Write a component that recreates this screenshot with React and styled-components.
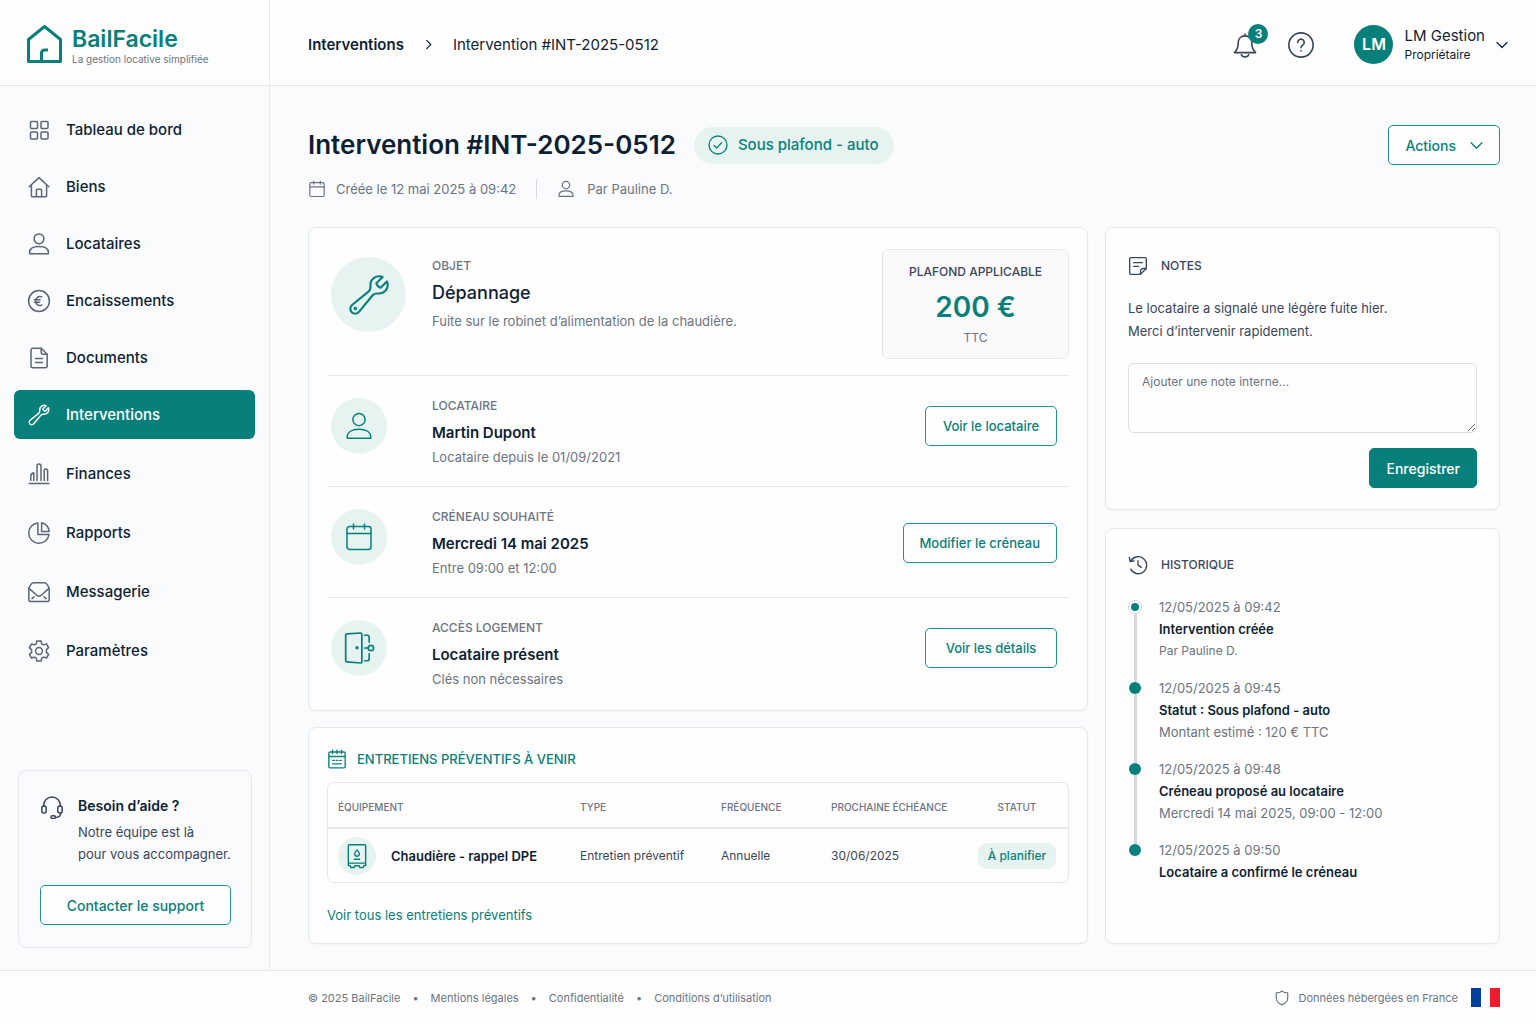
import React from 'react'
import styled, {createGlobalStyle, ThemeProvider} from 'styled-components'

const theme = {
  colours: {
    teal: '#07807b',
    tealBorder: '#23928d',
    tealSoft: '#e7f3f1',
    navy: '#0e1e33',
    slate: '#39465a',
    grey: '#6b7482',
    line: '#e4e7eb',
    page: '#fafbfc',
    white: '#fefefe'
  }
}

const GlobalStyle = createGlobalStyle`
  *, *::before, *::after {
    box-sizing: border-box;
  }

  body {
    margin: 0;
    background: ${theme.colours.page};
    color: ${theme.colours.navy};
    font-family: Inter, 'Liberation Sans', sans-serif;
    font-size: 13px;
    line-height: 20px;
  }

  h1, h2, h3, p, ul, ol, dl, dd {
    margin: 0;
    padding: 0;
  }

  ul, ol {
    list-style: none;
  }

  a {
    color: inherit;
    text-decoration: none;
  }

  button, textarea {
    font-family: inherit;
  }
`

const Svg = styled.svg`
  display: block;
  flex: none;
  width: ${props => props.$size || 24}px;
  height: ${props => props.$size || 24}px;
  fill: none;
  stroke: currentColor;
  stroke-width: ${props => props.$weight || 1.5};
  stroke-linecap: round;
  stroke-linejoin: round;
`

const Icon = ({size, weight, children}) => (
  <Svg $size={size} $weight={weight} viewBox="0 0 24 24" aria-hidden="true">
    {children}
  </Svg>
)

const GridIcon = props => (
  <Icon {...props}>
    <rect x="3.5" y="3.5" width="7" height="7" rx="1" />
    <rect x="14" y="3.5" width="7" height="7" rx="1" />
    <rect x="3.5" y="14" width="7" height="7" rx="1" />
    <rect x="14" y="14" width="7" height="7" rx="1" />
  </Icon>
)

const HomeIcon = props => (
  <Icon {...props}>
    <path d="M2.2 11.8 12 2.6l9.8 9.2" />
    <path d="M4.4 10v10.6a1.2 1.2 0 0 0 1.2 1.2h12.8a1.2 1.2 0 0 0 1.2-1.2V10" />
    <path d="M9.4 21.6v-6.4a1 1 0 0 1 1-1h3.2a1 1 0 0 1 1 1v6.4" />
  </Icon>
)

const UserIcon = props => (
  <Icon {...props}>
    <circle cx="12" cy="6.8" r="4.9" />
    <path d="M2.6 21.8v-1.2c0-3.7 3.6-6 9.4-6s9.4 2.3 9.4 6v1.2z" />
  </Icon>
)

const EuroIcon = props => (
  <Icon {...props}>
    <circle cx="12" cy="12" r="10.4" />
    <path d="M14.8 7.9a4.2 4.2 0 0 0-6 4.1 4.2 4.2 0 0 0 6 4.1M7.4 10.8h5.8M7.4 13.3h5.2" />
  </Icon>
)

const DocumentIcon = props => (
  <Icon {...props}>
    <path d="M14.2 2.2H6a2 2 0 0 0-2 2v15.6a2 2 0 0 0 2 2h12.2a2 2 0 0 0 2-2V8.2z" />
    <path d="M14.2 2.2v4a2 2 0 0 0 2 2h4M8.5 12.6h7M8.5 16.4h7" />
  </Icon>
)

const WrenchIcon = ({dot, ...props}) => (
  <Icon {...props}>
    <path d="M21.75 6.75a4.5 4.5 0 0 1-4.884 4.484c-1.076-.091-2.264.071-2.95.904l-7.152 8.684a2.548 2.548 0 1 1-3.586-3.586l8.684-7.152c.833-.686.995-1.874.904-2.95a4.5 4.5 0 0 1 6.336-4.486l-3.276 3.276a3.004 3.004 0 0 0 2.25 2.25l3.276-3.276c.256.565.398 1.192.398 1.852Z" />
    {dot && <circle cx="4.9" cy="19.1" r="0.4" />}
  </Icon>
)

const BarsIcon = props => (
  <Icon {...props}>
    <path d="M2.2 21.6h19.6M3.8 18.4v-4.2c0-1.8 1.2-3 3-3.4v7.6" />
    <path d="M10 18.4V4a2 2 0 0 1 4 0v14.4M17.2 18.4V9a1.7 1.7 0 0 1 3.4-.6v10" />
  </Icon>
)

const PieIcon = props => (
  <Icon {...props}>
    <path d="M10.9 1.9A10.2 10.2 0 1 0 22 13.6H10.9z" />
    <path d="M14.6 1.8v8.6h7.5a9.6 9.6 0 0 0-7.5-8.6z" />
  </Icon>
)

const MailIcon = props => (
  <Icon {...props}>
    <path d="M1.8 8.2v11a2.4 2.4 0 0 0 2.4 2.4h15.6a2.4 2.4 0 0 0 2.4-2.4v-11L19.8 4a3 3 0 0 0-2.4-1.2H6.6A3 3 0 0 0 4.2 4z" />
    <path d="m2 8.4 7.8 6.8a3.2 3.2 0 0 0 4.4 0L22 8.4M5 18.6l2-1.8M19 18.6l-2-1.8" />
  </Icon>
)

const GearIcon = props => (
  <Icon {...props}>
    <circle cx="12" cy="12" r="3.4" />
    <path d="M9.9 1.9h4.2l.6 2.9 2 1.1 2.8-.9 2.1 3.6-2.2 2v2.8l2.2 2-2.1 3.6-2.8-.9-2 1.1-.6 2.9H9.9l-.6-2.9-2-1.1-2.8.9-2.1-3.6 2.2-2v-2.8l-2.2-2L4.5 5l2.8.9 2-1.1z" />
  </Icon>
)

const HeadsetIcon = props => (
  <Icon {...props}>
    <path d="M3.6 11v-.6a8.4 8.4 0 0 1 16.8 0v.6" />
    <rect x="1.8" y="11" width="4.4" height="7" rx="2" />
    <rect x="17.8" y="11" width="4.4" height="7" rx="2" />
    <path d="M20.8 18c0 3-2.6 4.4-5.4 4.4" />
    <rect x="11" y="20.8" width="4.4" height="2.6" rx="1.3" />
  </Icon>
)

const BellIcon = props => (
  <Icon {...props}>
    <path d="M12 2v1.6M12 3.6c-4 0-6.3 2.8-6.3 6.6 0 4.8-1.2 6.8-3.5 8.8h19.6c-2.3-2-3.5-4-3.5-8.8 0-3.8-2.3-6.6-6.3-6.6z" />
    <path d="M8.6 21c.5 1.3 1.8 2 3.4 2s2.9-.7 3.4-2" />
  </Icon>
)

const HelpIcon = props => (
  <Icon {...props}>
    <circle cx="12" cy="12" r="11.2" />
    <path d="M9 9.6a3 3 0 1 1 4.6 2.5c-1 .7-1.6 1.2-1.6 2.4M12 17.3v.2" />
  </Icon>
)

const ChevronIcon = ({right, ...props}) => (
  <Icon {...props}>
    <path d={right ? 'm8 3 9 9-9 9' : 'm2 7 10 10L22 7'} />
  </Icon>
)

const CheckCircleIcon = props => (
  <Icon {...props}>
    <circle cx="12" cy="12" r="10.8" />
    <path d="m7.4 12.6 3 3 6-6.4" />
  </Icon>
)

const CalendarIcon = props => (
  <Icon {...props}>
    <rect x="2.4" y="3.6" width="19.2" height="18.4" rx="2" />
    <path d="M2.4 9.2h19.2M7.6 1.6v4M16.4 1.6v4" />
  </Icon>
)

const PlannerIcon = props => (
  <Icon {...props}>
    <rect x="2.2" y="3.6" width="19.6" height="19" rx="1.6" />
    <path d="M2.2 9h19.6M6.6 1.4v4M12 1.4v4M17.4 1.4v4M6.8 13.6h2M11 13.6h2M15.2 13.6h2M6.8 17.8h10.4" />
  </Icon>
)

const DoorIcon = props => (
  <Icon {...props}>
    <path d="M2.6 2.8a.8.8 0 0 1 .8-.8l9.8-.6a.8.8 0 0 1 .8.8v19.6a.8.8 0 0 1-.8.8l-9.8-.8a.8.8 0 0 1-.8-.8z" />
    <path d="M16 3h1.8a1.4 1.4 0 0 1 1.4 1.4v3.4M19.2 16.2v3.4a1.4 1.4 0 0 1-1.4 1.4H16M16 12h2.4" />
    <circle cx="20.4" cy="12" r="1.9" />
    <circle cx="10.6" cy="11.8" r="0.6" fill="currentColor" />
  </Icon>
)

const BoilerIcon = props => (
  <Icon {...props}>
    <rect x="4" y="1.6" width="16" height="17" rx="1" />
    <path d="M4 18.6v2.2h1.6l.6 1.8h3.2l.6-1.6h4l.6 1.6h3.2l.6-1.8H20v-2.2M9.6 15h4.8" />
    <path d="M12 6.4c-1.4 1.6-2.2 2.4-2.2 3.6a2.2 2.2 0 0 0 4.4 0c0-1.2-.8-2-2.2-3.6z" />
  </Icon>
)

const NoteIcon = props => (
  <Icon {...props}>
    <path d="M22 15V3.6A1.6 1.6 0 0 0 20.4 2H3.6A1.6 1.6 0 0 0 2 3.6v16.8A1.6 1.6 0 0 0 3.6 22H15z" />
    <path d="M15 22v-3.8a3.2 3.2 0 0 1 3.2-3.2H22M6.8 8h10.4M6.8 12.4H13" />
  </Icon>
)

const HistoryIcon = props => (
  <Icon {...props}>
    <path d="M3.6 6.8A10.2 10.2 0 1 1 3.2 17M1.6 3l1 4.8 4.8-.8M12 6.8v5.4l4 2.6" />
  </Icon>
)

const ShieldIcon = props => (
  <Icon {...props}>
    <path d="M12 1.8c2.6 1.7 5.6 2.4 8.6 2.4v7.6c0 5-3.2 8.6-8.6 10.6-5.4-2-8.6-5.6-8.6-10.6V4.2c3 0 6-.7 8.6-2.4z" />
  </Icon>
)

const Page = styled.div`
  display: grid;
  grid-template-columns: 270px minmax(0, 1fr);
  grid-template-rows: 86px 1fr auto;
  min-height: 100vh;
`

const Brand = styled.a`
  display: flex;
  align-items: center;
  gap: 9px;
  padding: 2px 0 0 26px;
  background: ${props => props.theme.colours.white};
  border-right: 1px solid ${props => props.theme.colours.line};
  border-bottom: 1px solid ${props => props.theme.colours.line};
`

const BrandMark = styled.svg`
  display: block;
  width: 37px;
  height: 40px;
  fill: none;
  stroke: ${props => props.theme.colours.teal};
  stroke-width: 3;
  stroke-linejoin: round;
`

const BrandText = styled.span`
  padding-top: 4px;
`

const BrandName = styled.strong`
  display: block;
  font-size: 23px;
  line-height: 26px;
  font-weight: 600;
  color: ${props => props.theme.colours.teal};
`

const BrandTagline = styled.span`
  display: block;
  font-size: 10px;
  line-height: 14px;
  color: ${props => props.theme.colours.grey};
`

const TopBar = styled.header`
  display: flex;
  align-items: center;
  justify-content: space-between;
  padding: 4px 28px 0 38px;
  background: ${props => props.theme.colours.white};
  border-bottom: 1px solid ${props => props.theme.colours.line};
`

const Breadcrumb = styled.nav`
  display: flex;
  align-items: center;
  gap: 19px;
  font-size: 15px;
`

const Crumb = styled.a`
  font-weight: ${props => (props.$strong ? 600 : 400)};
`

const TopActions = styled.div`
  display: flex;
  align-items: center;
`

const IconButton = styled.button`
  position: relative;
  display: flex;
  margin-right: 30px;
  padding: 0;
  border: 0;
  background: none;
  color: ${props => props.theme.colours.slate};
  cursor: pointer;
`

const Counter = styled.span`
  position: absolute;
  top: -8px;
  right: -10px;
  width: 20px;
  border-radius: 50%;
  background: ${props => props.theme.colours.teal};
  color: #fff;
  font-size: 12px;
  line-height: 20px;
  font-weight: 600;
  text-align: center;
`

const Account = styled.button`
  display: flex;
  align-items: center;
  gap: 11px;
  margin-left: 10px;
  padding: 0;
  border: 0;
  background: none;
  color: ${props => props.theme.colours.navy};
  font-size: 15px;
  line-height: 20px;
  text-align: left;
  cursor: pointer;
`

const Avatar = styled.span`
  width: 39px;
  border-radius: 50%;
  background: ${props => props.theme.colours.teal};
  color: #fff;
  font-size: 16px;
  line-height: 39px;
  font-weight: 600;
  text-align: center;
`

const AccountRole = styled.span`
  display: block;
  font-size: 12px;
  line-height: 18px;
`

const Sidebar = styled.aside`
  display: flex;
  flex-direction: column;
  justify-content: space-between;
  padding: 19px 14px 22px;
  border-right: 1px solid ${props => props.theme.colours.line};
`

const NavList = styled.ul`
  display: flex;
  flex-direction: column;
  gap: ${props => props.$gap}px;

  & + & {
    margin-top: 10px;
  }
`

const NavLink = styled.a`
  display: flex;
  align-items: center;
  gap: 15px;
  height: 49px;
  padding-left: 13px;
  border-radius: 6px;
  background: ${props => (props.$active ? props.theme.colours.teal : 'none')};
  color: ${props => (props.$active ? '#fff' : props.theme.colours.navy)};
  font-size: 15px;
  font-weight: 500;

  svg {
    color: ${props => (props.$active ? '#fff' : '#5b6575')};
  }
`

const HelpBox = styled.section`
  display: flex;
  flex-direction: column;
  gap: 20px;
  margin: 24px 3px 0 4px;
  padding: 24px 20px 22px 21px;
  border: 1px solid ${props => props.theme.colours.line};
  border-radius: 8px;
`

const HelpIntro = styled.div`
  display: flex;
  gap: 14px;
  color: ${props => props.theme.colours.slate};
  line-height: 22px;
`

const HelpTitle = styled.h2`
  margin-bottom: 4px;
  color: ${props => props.theme.colours.navy};
  font-size: 14px;
  line-height: 22px;
  font-weight: 600;
`

const Button = styled.button`
  display: inline-flex;
  align-items: center;
  justify-content: center;
  gap: 14px;
  height: 40px;
  padding: 0 16px;
  border: 1px solid
    ${props => props.theme.colours[props.$filled ? 'teal' : 'tealBorder']};
  border-radius: 5px;
  background: ${props =>
    props.$filled ? props.theme.colours.teal : props.theme.colours.white};
  color: ${props => (props.$filled ? '#fff' : props.theme.colours.teal)};
  font-size: ${props => (props.$large ? 14 : 13)}px;
  font-weight: 500;
  white-space: nowrap;
  cursor: pointer;
`

const Main = styled.main`
  padding: 39px 36px 25px 38px;
`

const TitleRow = styled.div`
  display: flex;
  align-items: center;
  gap: 18px;
  margin-bottom: 14px;

  button {
    margin-left: auto;
  }
`

const Title = styled.h1`
  font-size: 26px;
  line-height: 40px;
  font-weight: 600;
`

const StatusPill = styled.span`
  display: flex;
  align-items: center;
  gap: 10px;
  height: 37px;
  padding: 0 16px 0 14px;
  border-radius: 19px;
  background: ${props => props.theme.colours.tealSoft};
  color: ${props => props.theme.colours.teal};
  font-size: 15px;
  font-weight: 500;
`

const Meta = styled.ul`
  display: flex;
  align-items: center;
  margin-bottom: 28px;
  color: ${props => props.theme.colours.grey};
`

const MetaItem = styled.li`
  display: flex;
  align-items: center;
  gap: 10px;

  & + & {
    gap: 12px;
    margin-left: 20px;
    padding-left: 20px;
    border-left: 1px solid #d6dae0;
  }
`

const Columns = styled.div`
  display: grid;
  grid-template-columns: minmax(0, 1fr) 395px;
  gap: 17px;
`

const Stack = styled.div`
  display: flex;
  flex-direction: column;
  gap: ${props => props.$gap}px;
`

const Card = styled.section`
  flex: ${props => (props.$grow ? 1 : 'none')};
  padding: ${props => props.$pad};
  border: 1px solid ${props => props.theme.colours.line};
  border-radius: 8px;
  background: ${props => props.theme.colours.white};
  box-shadow: 0 1px 2px rgba(15, 30, 50, 0.03);
`

const DetailRow = styled.div`
  display: grid;
  grid-template-columns: 77px minmax(0, 1fr) auto;
  column-gap: 24px;
  padding: ${props => (props.$first ? '21px 0 16px 4px' : '21px 12px 19px 4px')};

  & + & {
    border-top: 1px solid ${props => props.theme.colours.line};
  }
`

const Disc = styled.span`
  display: flex;
  align-items: center;
  justify-content: center;
  width: ${props => props.$size}px;
  height: ${props => props.$size}px;
  margin-top: ${props => props.$drop || 0}px;
  border-radius: 50%;
  background: ${props => props.theme.colours.tealSoft};
  color: ${props => props.theme.colours.teal};
`

const DetailText = styled.div`
  padding-top: ${props => (props.$first ? 8 : 0)}px;
`

const Label = styled.h2`
  color: ${props => props.theme.colours[props.$dark ? 'slate' : 'grey']};
  font-size: 12px;
  line-height: 18px;
  font-weight: 500;
  text-transform: uppercase;
`

const DetailTitle = styled.p`
  margin-top: 6px;
  font-size: ${props => (props.$first ? 18 : 15)}px;
  line-height: 24px;
  font-weight: ${props => (props.$first ? 500 : 600)};
`

const DetailNote = styled.p`
  margin-top: ${props => (props.$first ? 6 : 2)}px;
  color: ${props => props.theme.colours.grey};
`

const DetailAction = styled.div`
  display: flex;
  align-items: center;
  height: ${props => (props.$centred ? '100%' : '58px')};

  button {
    min-width: 132px;
  }
`

const CeilingBox = styled.div`
  display: flex;
  flex-direction: column;
  align-items: center;
  width: 187px;
  padding: 13px 0 11px;
  border: 1px solid ${props => props.theme.colours.line};
  border-radius: 6px;
  background: #fafafb;
`

const CeilingAmount = styled.strong`
  margin: 9px 0 5px;
  color: ${props => props.theme.colours.teal};
  font-size: 28px;
  line-height: 34px;
  font-weight: 600;
`

const CeilingTax = styled.span`
  color: ${props => props.theme.colours.grey};
  font-size: 12px;
  line-height: 18px;
`

const SectionTitle = styled.h2`
  display: flex;
  align-items: center;
  gap: ${props => props.$gap || 10}px;
  color: ${props => props.theme.colours[props.$teal ? 'teal' : 'slate']};
  font-size: ${props => (props.$teal ? 13 : 12)}px;
  line-height: 20px;
  font-weight: 500;
  text-transform: uppercase;
`

const TableFrame = styled.div`
  margin: 13px 0 22px;
  border: 1px solid ${props => props.theme.colours.line};
  border-radius: 7px;
`

const Table = styled.table`
  width: 100%;
  border-collapse: collapse;
  table-layout: fixed;
`

const HeadCell = styled.th`
  width: ${props => props.$width || 'auto'};
  height: 45px;
  padding: 3px 0 0 ${props => (props.$centred ? 0 : 10)}px;
  border-bottom: 2px solid ${props => props.theme.colours.line};
  color: ${props => props.theme.colours.grey};
  font-size: 10px;
  line-height: 16px;
  font-weight: 500;
  text-align: ${props => (props.$centred ? 'center' : 'left')};
  text-transform: uppercase;
`

const Cell = styled.td`
  height: 54px;
  padding: 0 0 0 ${props => (props.$centred ? 0 : 10)}px;
  color: ${props => props.theme.colours.slate};
  font-size: 12px;
  text-align: ${props => (props.$centred ? 'center' : 'left')};
`

const Equipment = styled.div`
  display: flex;
  align-items: center;
  gap: 15px;
  color: ${props => props.theme.colours.navy};
  font-size: 13px;
  font-weight: 600;
`

const PlanTag = styled.span`
  display: inline-block;
  padding: 3px 10px;
  border-radius: 9px;
  background: ${props => props.theme.colours.tealSoft};
  color: ${props => props.theme.colours.teal};
  font-weight: 500;
`

const TextLink = styled.a`
  color: ${props => props.theme.colours.teal};
`

const NoteText = styled.p`
  margin: 21px 0 20px;
  color: ${props => props.theme.colours.slate};
  line-height: 23px;
`

const NoteForm = styled.form`
  display: flex;
  flex-direction: column;
  align-items: flex-end;
  gap: 15px;
`

const NoteInput = styled.textarea`
  display: block;
  width: 100%;
  height: 70px;
  padding: 9px 13px;
  border: 1px solid #dcdfe5;
  border-radius: 6px;
  background: ${props => props.theme.colours.white};
  color: ${props => props.theme.colours.navy};
  font-size: 12px;
  line-height: 18px;
  resize: vertical;

  &::placeholder {
    color: ${props => props.theme.colours.grey};
  }
`

const Timeline = styled.ol`
  margin-top: 21px;
`

const TimelineItem = styled.li`
  display: grid;
  grid-template-columns: 14px 1fr;
  column-gap: 17px;
  min-height: 81px;
  line-height: 22px;

  &:last-child {
    min-height: 0;
  }
`

const TimelineRail = styled.span`
  display: flex;
  flex-direction: column;
  align-items: center;
  margin-bottom: -5px;
  padding-top: 5px;

  &::before {
    content: '';
    width: 12px;
    height: 12px;
    border: ${props => (props.$ring ? '2px solid #fff' : '0')};
    border-radius: 50%;
    background: ${props => props.theme.colours.teal};
    outline: ${props => (props.$ring ? '1px solid #cfd4da' : 'none')};
  }

  &::after {
    content: '';
    flex: 1;
    width: 3px;
    background: #d6dade;
  }

  ${TimelineItem}:last-child &::after {
    display: none;
  }
`

const TimelineText = styled.p`
  color: ${props => props.theme.colours[props.$strong ? 'navy' : 'grey']};
  font-size: ${props => (props.$small ? 12 : 13)}px;
  font-weight: ${props => (props.$strong ? 600 : 400)};
`

const Footer = styled.footer`
  grid-column: 1 / -1;
  display: flex;
  align-items: center;
  justify-content: space-between;
  height: 54px;
  padding: 0 36px 0 308px;
  border-top: 1px solid ${props => props.theme.colours.line};
  background: ${props => props.theme.colours.white};
  color: ${props => props.theme.colours.grey};
  font-size: 11px;
`

const FooterLinks = styled.ul`
  display: flex;

  li + li::before {
    content: '•';
    margin: 0 12px;
  }
`

const Hosting = styled.div`
  display: flex;
  align-items: center;
`

const HostingText = styled.span`
  margin: 0 13px 0 9px;
`

const Flag = styled.svg`
  display: block;
  width: 29px;
  height: 19px;
`

const mainNav = [
  {label: 'Tableau de bord', icon: GridIcon},
  {label: 'Biens', icon: HomeIcon},
  {label: 'Locataires', icon: UserIcon},
  {label: 'Encaissements', icon: EuroIcon},
  {label: 'Documents', icon: DocumentIcon},
  {label: 'Interventions', icon: WrenchIcon, active: true}
]

const toolsNav = [
  {label: 'Finances', icon: BarsIcon},
  {label: 'Rapports', icon: PieIcon},
  {label: 'Messagerie', icon: MailIcon},
  {label: 'Paramètres', icon: GearIcon}
]

const details = [
  {
    label: 'Locataire',
    title: 'Martin Dupont',
    note: 'Locataire depuis le 01/09/2021',
    action: 'Voir le locataire',
    icon: UserIcon
  },
  {
    label: 'Créneau souhaité',
    title: 'Mercredi 14 mai 2025',
    note: 'Entre 09:00 et 12:00',
    action: 'Modifier le créneau',
    icon: CalendarIcon,
    centred: true
  },
  {
    label: 'Accès logement',
    title: 'Locataire présent',
    note: 'Clés non nécessaires',
    action: 'Voir les détails',
    icon: DoorIcon,
    iconSize: 34
  }
]

const columns = [
  {label: 'Équipement'},
  {label: 'Type', width: '141px'},
  {label: 'Fréquence', width: '110px'},
  {label: 'Prochaine échéance', width: '145px'},
  {label: 'Statut', width: '102px', centred: true}
]

const events = [
  {date: '12/05/2025 à 09:42', title: 'Intervention créée', note: 'Par Pauline D.'},
  {
    date: '12/05/2025 à 09:45',
    title: 'Statut : Sous plafond - auto',
    note: 'Montant estimé : 120 € TTC'
  },
  {
    date: '12/05/2025 à 09:48',
    title: 'Créneau proposé au locataire',
    note: 'Mercredi 14 mai 2025, 09:00 - 12:00'
  },
  {date: '12/05/2025 à 09:50', title: 'Locataire a confirmé le créneau'}
]

const Nav = ({items, gap}) => (
  <NavList $gap={gap}>
    {items.map(({label, icon: ItemIcon, active}) => (
      <li key={label}>
        <NavLink href="#" $active={active} aria-current={active ? 'page' : undefined}>
          <ItemIcon />
          {label}
        </NavLink>
      </li>
    ))}
  </NavList>
)

const Summary = () => (
  <Card $pad="0 18px 2px">
    <DetailRow $first>
      <Disc $size={75} $drop={8}>
        <WrenchIcon dot size={46} weight={1.1} />
      </Disc>
      <DetailText $first>
        <Label>Objet</Label>
        <DetailTitle $first>Dépannage</DetailTitle>
        <DetailNote $first>Fuite sur le robinet d’alimentation de la chaudière.</DetailNote>
      </DetailText>
      <CeilingBox>
        <Label $dark>Plafond applicable</Label>
        <CeilingAmount>200 €</CeilingAmount>
        <CeilingTax>TTC</CeilingTax>
      </CeilingBox>
    </DetailRow>
    {details.map(({label, title, note, action, icon: RowIcon, iconSize, centred}) => (
      <DetailRow key={label}>
        <Disc $size={56} $drop={1}>
          <RowIcon size={iconSize || 30} weight={1.2} />
        </Disc>
        <DetailText>
          <Label>{label}</Label>
          <DetailTitle>{title}</DetailTitle>
          <DetailNote>{note}</DetailNote>
        </DetailText>
        <DetailAction $centred={centred}>
          <Button type="button">{action}</Button>
        </DetailAction>
      </DetailRow>
    ))}
  </Card>
)

const Maintenance = () => (
  <Card $pad="21px 18px 18px">
    <SectionTitle $teal>
      <PlannerIcon size={20} weight={1.6} />
      Entretiens préventifs à venir
    </SectionTitle>
    <TableFrame>
      <Table>
        <thead>
          <tr>
            {columns.map(({label, width, centred}) => (
              <HeadCell key={label} scope="col" $width={width} $centred={centred}>
                {label}
              </HeadCell>
            ))}
          </tr>
        </thead>
        <tbody>
          <tr>
            <Cell>
              <Equipment>
                <Disc $size={38}>
                  <BoilerIcon size={26} weight={1.3} />
                </Disc>
                Chaudière - rappel DPE
              </Equipment>
            </Cell>
            <Cell>Entretien préventif</Cell>
            <Cell>Annuelle</Cell>
            <Cell>30/06/2025</Cell>
            <Cell $centred>
              <PlanTag>À planifier</PlanTag>
            </Cell>
          </tr>
        </tbody>
      </Table>
    </TableFrame>
    <TextLink href="#">Voir tous les entretiens préventifs</TextLink>
  </Card>
)

const Notes = () => (
  <Card $pad="28px 22px 21px">
    <SectionTitle $gap={13}>
      <NoteIcon size={20} weight={1.6} />
      Notes
    </SectionTitle>
    <NoteText>
      Le locataire a signalé une légère fuite hier.
      <br />
      Merci d’intervenir rapidement.
    </NoteText>
    <NoteForm onSubmit={e => e.preventDefault()}>
      <NoteInput aria-label="Note interne" placeholder="Ajouter une note interne..." />
      <Button type="submit" $filled $large>
        Enregistrer
      </Button>
    </NoteForm>
  </Card>
)

const History = () => (
  <Card $grow $pad="26px 22px 21px">
    <SectionTitle $gap={13}>
      <HistoryIcon size={20} weight={1.6} />
      Historique
    </SectionTitle>
    <Timeline>
      {events.map(({date, title, note}, i) => (
        <TimelineItem key={date}>
          <TimelineRail $ring={i === 0} />
          <div>
            <TimelineText>{date}</TimelineText>
            <TimelineText $strong>{title}</TimelineText>
            {note && <TimelineText $small={i === 0}>{note}</TimelineText>}
          </div>
        </TimelineItem>
      ))}
    </Timeline>
  </Card>
)

const App = () => (
  <ThemeProvider theme={theme}>
    <GlobalStyle />
    <Page>
      <Brand href="#">
        <BrandMark viewBox="0 0 37 40" aria-hidden="true">
          <path d="M2.5 15.5 18.5 2.5l16 13V37.5h-32z" />
          <path d="M15.5 37.5V29a3 3 0 0 1 3-3H22" />
        </BrandMark>
        <BrandText>
          <BrandName>BailFacile</BrandName>
          <BrandTagline>La gestion locative simplifiée</BrandTagline>
        </BrandText>
      </Brand>
      <TopBar>
        <Breadcrumb aria-label="Fil d’Ariane">
          <Crumb href="#" $strong>
            Interventions
          </Crumb>
          <ChevronIcon right size={11} weight={2.6} />
          <Crumb as="span">Intervention #INT-2025-0512</Crumb>
        </Breadcrumb>
        <TopActions>
          <IconButton type="button" aria-label="Notifications">
            <BellIcon size={26} />
            <Counter>3</Counter>
          </IconButton>
          <IconButton type="button" aria-label="Aide">
            <HelpIcon size={26} />
          </IconButton>
          <Account type="button">
            <Avatar>LM</Avatar>
            <span>
              LM Gestion
              <AccountRole>Propriétaire</AccountRole>
            </span>
            <ChevronIcon size={12} weight={2.4} />
          </Account>
        </TopActions>
      </TopBar>

      <Sidebar>
        <nav>
          <Nav items={mainNav} gap={8} />
          <Nav items={toolsNav} gap={10} />
        </nav>
        <HelpBox>
          <HelpIntro>
            <HeadsetIcon />
            <div>
              <HelpTitle>Besoin d’aide ?</HelpTitle>
              Notre équipe est là
              <br />
              pour vous accompagner.
            </div>
          </HelpIntro>
          <Button type="button" $large>
            Contacter le support
          </Button>
        </HelpBox>
      </Sidebar>

      <Main>
        <TitleRow>
          <Title>Intervention #INT-2025-0512</Title>
          <StatusPill>
            <CheckCircleIcon size={20} weight={1.6} />
            Sous plafond - auto
          </StatusPill>
          <Button type="button" $large>
            Actions
            <ChevronIcon size={13} weight={2.4} />
          </Button>
        </TitleRow>
        <Meta>
          <MetaItem>
            <CalendarIcon size={18} weight={1.6} />
            Créée le 12 mai 2025 à 09:42
          </MetaItem>
          <MetaItem>
            <UserIcon size={18} weight={1.6} />
            Par Pauline D.
          </MetaItem>
        </Meta>
        <Columns>
          <Stack $gap={16}>
            <Summary />
            <Maintenance />
          </Stack>
          <Stack $gap={18}>
            <Notes />
            <History />
          </Stack>
        </Columns>
      </Main>

      <Footer>
        <FooterLinks>
          <li>© 2025 BailFacile</li>
          <li>
            <a href="#">Mentions légales</a>
          </li>
          <li>
            <a href="#">Confidentialité</a>
          </li>
          <li>
            <a href="#">Conditions d’utilisation</a>
          </li>
        </FooterLinks>
        <Hosting>
          <ShieldIcon size={16} weight={1.8} />
          <HostingText>Données hébergées en France</HostingText>
          <Flag viewBox="0 0 29 19" role="img" aria-label="Drapeau français">
            <rect width="29" height="19" fill="#fff" />
            <rect width="10" height="19" fill="#003f9a" />
            <rect x="19" width="10" height="19" fill="#ef1c2e" />
          </Flag>
        </Hosting>
      </Footer>
    </Page>
  </ThemeProvider>
)

export default App
